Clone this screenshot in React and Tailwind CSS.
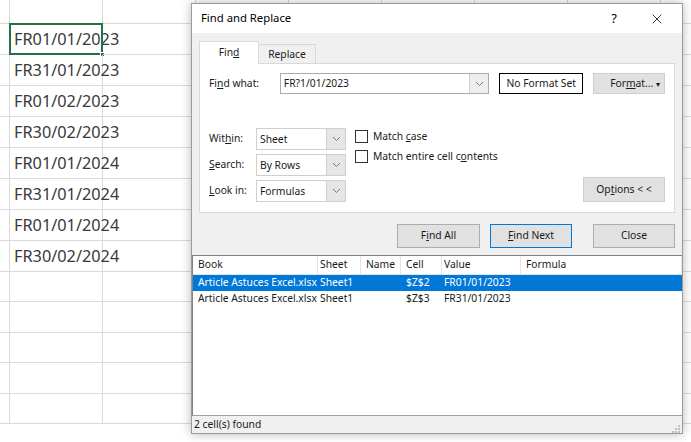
import { X } from "lucide-react";

const rowHeights = [24, 31, 31, 31, 31, 31, 31, 31, 31, 30, 31, 30, 31, 30];
const colWidths = [10, 93, 93, 93, 93, 93, 93, 93, 93];

const values = [
  "FR01/01/2023",
  "FR31/01/2023",
  "FR01/02/2023",
  "FR30/02/2023",
  "FR01/01/2024",
  "FR31/01/2024",
  "FR01/01/2024",
  "FR30/02/2024",
];

function Chevron() {
  return (
    <svg width="9" height="6" viewBox="0 0 9 6" fill="none">
      <path d="M1 1l3.5 3.5L8 1" stroke="#7a7a7a" strokeWidth="1" />
    </svg>
  );
}

function Select({ value, width }) {
  return (
    <div
      className={`flex h-[22px] ${width} border border-[#cfcfcf] bg-white`}
    >
      <span className="flex-1 pl-[3px] leading-[20px]">{value}</span>
      <span className="flex w-[19px] items-center justify-center border-l border-[#cfcfcf] bg-[#e6e6e6]">
        <Chevron />
      </span>
    </div>
  );
}

function Checkbox({ children }) {
  return (
    <div className="flex h-[13px] items-center gap-[5px]">
      <span className="h-[13px] w-[13px] border border-[#333] bg-white" />
      <span>{children}</span>
    </div>
  );
}

function Button({ children, width, blue }) {
  return (
    <div
      className={`flex h-[24px] ${width} items-center justify-center border ${
        blue ? "border-[#0078d7]" : "border-[#adadad]"
      } bg-[#e1e1e1]`}
    >
      {children}
    </div>
  );
}

function Sheet() {
  return (
    <div className="flex flex-col font-['Noto_Sans',sans-serif]">
      {rowHeights.map((h, r) => (
        <div key={r} className="flex" style={{ height: h }}>
          {colWidths.map((w, c) => (
            <div
              key={c}
              className="relative shrink-0 border-r border-b border-[#dadada]"
              style={{ width: w }}
            >
              {c === 1 && r >= 1 && r <= 8 && (
                <span className="absolute left-[4px] top-0 flex h-full items-center whitespace-nowrap text-[16.3px] text-[#3a3a3a]">
                  {values[r - 1]}
                </span>
              )}
              {c === 1 && r === 1 && (
                <>
                  <span className="absolute -left-px -top-px h-[calc(100%+2px)] w-[calc(100%+2px)] border-2 border-[#217346]" />
                  <span className="absolute -bottom-[3px] -right-[3px] h-[5px] w-[5px] border border-white bg-[#217346]" />
                </>
              )}
            </div>
          ))}
        </div>
      ))}
    </div>
  );
}

const cols = [
  { label: "Book", w: "w-[125px]", pl: "pl-[5px]" },
  { label: "Sheet", w: "w-[43px]", pl: "pl-[2px]" },
  { label: "Name", w: "w-[40px]", pl: "pl-[5px]" },
  { label: "Cell", w: "w-[41px]", pl: "pl-[5px]" },
  { label: "Value", w: "w-[79px]", pl: "pl-[2px]" },
  { label: "Formula", w: "flex-1", pl: "pl-[5px]" },
];

const results = [
  ["Article Astuces Excel.xlsx", "Sheet1", "", "$Z$2", "FR01/01/2023", ""],
  ["Article Astuces Excel.xlsx", "Sheet1", "", "$Z$3", "FR31/01/2023", ""],
];

function Dialog() {
  return (
    <div className="absolute left-[191px] top-[3px] flex h-[431px] w-[492px] flex-col border border-[#9a9a9a] bg-[#f0f0f0] font-['Noto_Sans',sans-serif] text-[10.3px] text-[#1a1a1a] shadow-[0_0_10px_rgba(0,0,0,0.28)]">
      {/* title bar */}
      <div className="flex h-[29px] items-center bg-white pl-[9px]">
        <span className="text-[11.3px] text-black">Find and Replace</span>
        <span className="ml-auto mr-[32px] text-[13px] text-black">?</span>
        <X size={16} strokeWidth={1.2} className="mr-[17px] text-black" />
      </div>

      <div className="px-[7px] pt-[8px]">
        {/* tabs */}
        <div className="flex h-[23px] items-end">
          <div className="relative z-10 flex h-[23px] w-[60px] items-center justify-center border border-b-0 border-[#d9d9d9] bg-white">
            Fin<u>d</u>
          </div>
          <div className="flex h-[20px] w-[57px] items-center justify-center border border-b-0 border-l-0 border-[#d9d9d9]">
            Replace
          </div>
        </div>

        {/* panel */}
        <div className="-mt-px flex h-[150px] w-[476px] flex-col border border-[#d9d9d9] bg-white px-[9px] pt-[9px]">
          <div className="flex h-[21px] items-center">
            <span className="w-[71px]">
              Fi<u>n</u>d what:
            </span>
            <div className="flex h-[21px] w-[210px] border border-[#ababab]">
              <span className="flex-1 pl-[3px] leading-[19px]">FR?1/01/2023</span>
              <span className="flex w-[19px] items-center justify-center border-l border-[#d0d0d0] bg-[#eeeeee]">
                <Chevron />
              </span>
            </div>
            <div className="ml-[10px] flex h-[21px] w-[84px] items-center justify-center border border-black">
              No Format Set
            </div>
            <div className="ml-[10px] flex h-[21px] w-[72px] items-center border border-[#cfcfcf] bg-[#e1e1e1] pl-[16px]">
              For<u>m</u>at...
              <span className="ml-auto mr-[4px] text-[8px]">▾</span>
            </div>
          </div>

          <div className="mt-[34px] flex">
            <div className="flex flex-col gap-[4px]">
              <div className="flex items-center">
                <span className="w-[47px]">
                  Wit<u>h</u>in:
                </span>
                <Select value="Sheet" width="w-[90px]" />
              </div>
              <div className="flex items-center">
                <span className="w-[47px]">
                  <u>S</u>earch:
                </span>
                <Select value="By Rows" width="w-[90px]" />
              </div>
              <div className="flex items-center">
                <span className="w-[47px]">
                  <u>L</u>ook in:
                </span>
                <Select value="Formulas" width="w-[90px]" />
              </div>
            </div>
            <div className="ml-[9px] flex flex-col gap-[7px] pt-[2px]">
              <Checkbox>
                Match <u>c</u>ase
              </Checkbox>
              <Checkbox>
                Match entire cell c<u>o</u>ntents
              </Checkbox>
            </div>
            <div className="ml-auto self-end">
              <div className="flex h-[25px] w-[82px] items-center justify-center border border-[#cfcfcf] bg-[#e1e1e1]">
                Op<u>t</u>ions &lt; &lt;
              </div>
            </div>
          </div>
        </div>

        {/* buttons */}
        <div className="mt-[11px] flex justify-end">
          <Button width="w-[83px]">
            F<u>i</u>nd All
          </Button>
          <div className="ml-[10px]">
            <Button width="w-[82px]" blue>
              <u>F</u>ind Next
            </Button>
          </div>
          <div className="ml-[21px]">
            <Button width="w-[82px]">Close</Button>
          </div>
        </div>
      </div>

      {/* results list */}
      <div className="mt-[7px] flex h-[161px] flex-col border-t border-l border-[#828282] border-b border-b-[#a0a0a0] bg-white">
        <div className="flex h-[19px] items-center border-b border-[#e5e5e5]">
          {cols.map((c) => (
            <div
              key={c.label}
              className={`${c.w} ${c.pl} flex h-full items-center border-r border-[#e5e5e5]`}
            >
              {c.label}
            </div>
          ))}
        </div>
        {results.map((row, i) => (
          <div
            key={i}
            className={`flex h-[16px] items-center ${
              i === 0 ? "bg-[#0078d7] text-white" : ""
            }`}
          >
            {row.map((cell, j) => (
              <div
                key={j}
                className={`${cols[j].w} ${cols[j].pl} overflow-hidden whitespace-nowrap`}
              >
                {cell}
              </div>
            ))}
          </div>
        ))}
      </div>

      {/* status bar */}
      <div className="flex flex-1 items-center pl-[2px]">
        <span>2 cell(s) found</span>
        <svg className="ml-auto mr-[2px] mt-[6px]" width="10" height="10" viewBox="0 0 10 10">
          <rect x="8" y="2" width="2" height="2" fill="#c0c0c0" />
          <rect x="5" y="5" width="2" height="2" fill="#c0c0c0" />
          <rect x="8" y="5" width="2" height="2" fill="#c0c0c0" />
          <rect x="2" y="8" width="2" height="2" fill="#c0c0c0" />
          <rect x="5" y="8" width="2" height="2" fill="#c0c0c0" />
          <rect x="8" y="8" width="2" height="2" fill="#c0c0c0" />
        </svg>
      </div>
    </div>
  );
}

export default function App() {
  return (
    <div className="relative h-[442px] w-[691px] overflow-hidden bg-white">
      <Sheet />
      <Dialog />
    </div>
  );
}
